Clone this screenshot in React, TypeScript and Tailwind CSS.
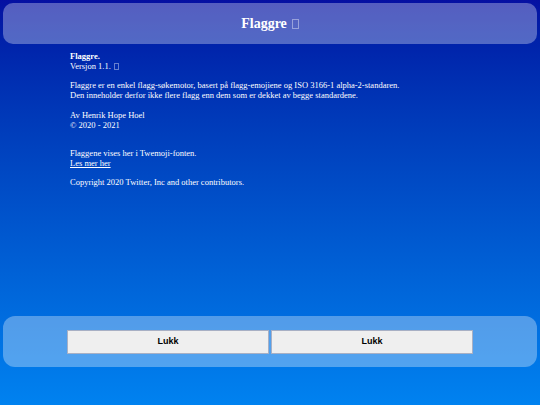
export default function App() {
  return (
    <div className="flex h-[405px] w-[540px] flex-col overflow-hidden bg-gradient-to-b from-[#0610a2] to-[#0082f0] font-['Liberation_Serif',serif] text-white">
      {/* Header */}
      <div className="mx-[3px] mt-[3px] flex h-[41px] items-center justify-center rounded-[10px] bg-white/[0.32]">
        <h1 className="flex items-center gap-[5px] text-[14px] font-bold">
          Flaggre
          <span className="inline-block h-[10px] w-[7px] border border-white/40" />
        </h1>
      </div>

      {/* About text */}
      <div className="px-[70px] pt-[7px] text-[8.5px] leading-[10px]">
        <p className="font-bold">Flaggre.</p>
        <p className="flex items-center gap-[3px]">
          Versjon 1.1.
          <span className="inline-block h-[7px] w-[5px] border border-white/40" />
        </p>
        <p className="mt-[9px]">
          Flaggre er en enkel flagg-søkemotor, basert på flagg-emojiene og ISO 3166-1 alpha-2-standaren.
          <br />
          Den inneholder derfor ikke flere flagg enn dem som er dekket av begge standardene.
        </p>
        <p className="mt-[10px]">
          Av Henrik Hope Hoel
          <br />© 2020 - 2021
        </p>
        <p className="mt-[18px]">
          Flaggene vises her i Twemoji-fonten.
          <br />
          <a href="#" className="underline">
            Les mer her
          </a>
        </p>
        <p className="mt-[9px]">Copyright 2020 Twitter, Inc and other contributors.</p>
      </div>

      {/* Footer */}
      <div className="mx-[3px] mb-[38px] mt-auto flex h-[51px] items-center justify-center rounded-[12px] bg-white/[0.32]">
        <div className="flex w-[406px] gap-[2px]">
          <button className="h-[24px] flex-1 border border-[#a8b0c4] bg-[#efefef] font-['Liberation_Sans',sans-serif] text-[9px] font-bold text-black">
            Lukk
          </button>
          <button className="h-[24px] flex-1 border border-[#a8b0c4] bg-[#efefef] font-['Liberation_Sans',sans-serif] text-[9px] font-bold text-black">
            Lukk
          </button>
        </div>
      </div>
    </div>
  );
}
